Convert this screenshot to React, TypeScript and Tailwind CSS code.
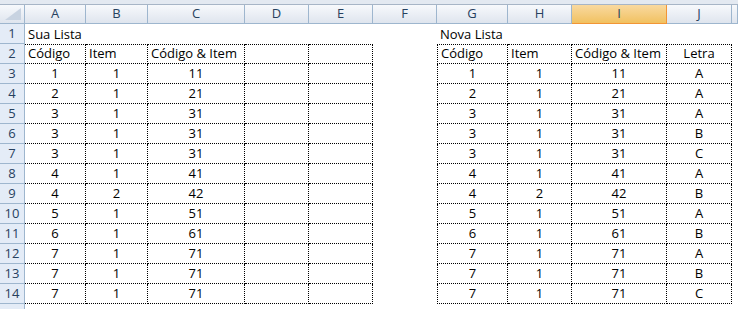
import React from "react";

const colLetters = ["A", "B", "C", "D", "E", "F", "G", "H", "I", "J", ""];

const left = [
  [1, 1, 11],
  [2, 1, 21],
  [3, 1, 31],
  [3, 1, 31],
  [3, 1, 31],
  [4, 1, 41],
  [4, 2, 42],
  [5, 1, 51],
  [6, 1, 61],
  [7, 1, 71],
  [7, 1, 71],
  [7, 1, 71],
];

const letras = ["A", "A", "A", "B", "C", "A", "B", "A", "B", "A", "B", "C"];

type CellProps = {
  children?: React.ReactNode;
  boxed?: boolean;
  first?: boolean;
  edge?: boolean;
  center?: boolean;
};

function Cell({ children, boxed, first, edge, center }: CellProps) {
  return (
    <div
      className={[
        "h-[20px] flex items-end pb-[1px] px-[3px] overflow-hidden whitespace-nowrap leading-[17px] text-black",
        center ? "justify-center" : "justify-start",
        boxed ? "border-r border-b border-dotted border-black" : "",
        boxed && first ? "border-t" : "",
        boxed && edge ? "border-l" : "",
      ].join(" ")}
    >
      {children}
    </div>
  );
}

function RowHead({ n }: { n?: number }) {
  return (
    <div className="h-[20px] flex items-center justify-center bg-[#e4ecf7] border-r border-b border-[#9eb6ce] text-[#27415f]">
      {n}
    </div>
  );
}

export default function App() {
  return (
    <div
      className="w-[738px] h-[309px] overflow-hidden bg-white text-[13px]"
      style={{ fontFamily: '"Open Sans", "Liberation Sans", sans-serif' }}
    >
      <div className="h-[5px] bg-[#e3e9f1] border-b border-[#a7b5c6]" />
      <div className="grid grid-cols-[25px_61px_62px_97px_64px_64px_64px_71px_64px_95px_65px_6px]">
        {/* column headers */}
        <div className="h-[19px] relative bg-gradient-to-b from-[#f7f9fc] to-[#dfe5ee] border-r border-b border-[#9eb6ce]">
          <svg className="absolute right-[3px] bottom-[3px]" width="16" height="12" viewBox="0 0 16 12">
            <polygon points="16,0 16,12 0,12" fill="#c8d3e1" />
          </svg>
        </div>
        {colLetters.map((c, i) =>
          c === "I" ? (
            <div
              key={i}
              className="h-[19px] flex items-center justify-center bg-gradient-to-b from-[#f9d99f] to-[#f1c15f] border-r border-b border-[#f29536] text-[#27415f]"
            >
              {c}
            </div>
          ) : (
            <div
              key={i}
              className="h-[19px] flex items-center justify-center bg-gradient-to-b from-[#f7f9fc] to-[#dfe5ee] border-r border-b border-[#9eb6ce] text-[#27415f]"
            >
              {c}
            </div>
          )
        )}

        {/* row 1 */}
        <RowHead n={1} />
        <Cell>Sua Lista</Cell>
        <Cell />
        <Cell />
        <Cell />
        <Cell />
        <Cell />
        <Cell>Nova Lista</Cell>
        <Cell />
        <Cell />
        <Cell />
        <Cell />

        {/* row 2 */}
        <RowHead n={2} />
        <Cell boxed first>Código</Cell>
        <Cell boxed first>Item</Cell>
        <Cell boxed first>Código &amp; Item</Cell>
        <Cell boxed first />
        <Cell boxed first />
        <Cell />
        <Cell boxed first edge>Código</Cell>
        <Cell boxed first>Item</Cell>
        <Cell boxed first>Código &amp; Item</Cell>
        <Cell boxed first center>Letra</Cell>
        <Cell />

        {left.map(([a, b, c], i) => (
          <React.Fragment key={i}>
            <RowHead n={i + 3} />
            <Cell boxed center>{a}</Cell>
            <Cell boxed center>{b}</Cell>
            <Cell boxed center>{c}</Cell>
            <Cell boxed />
            <Cell boxed />
            <Cell />
            <Cell boxed edge center>{a}</Cell>
            <Cell boxed center>{b}</Cell>
            <Cell boxed center>{c}</Cell>
            <Cell boxed center>{letras[i]}</Cell>
            <Cell />
          </React.Fragment>
        ))}

        <RowHead />
      </div>
    </div>
  );
}
